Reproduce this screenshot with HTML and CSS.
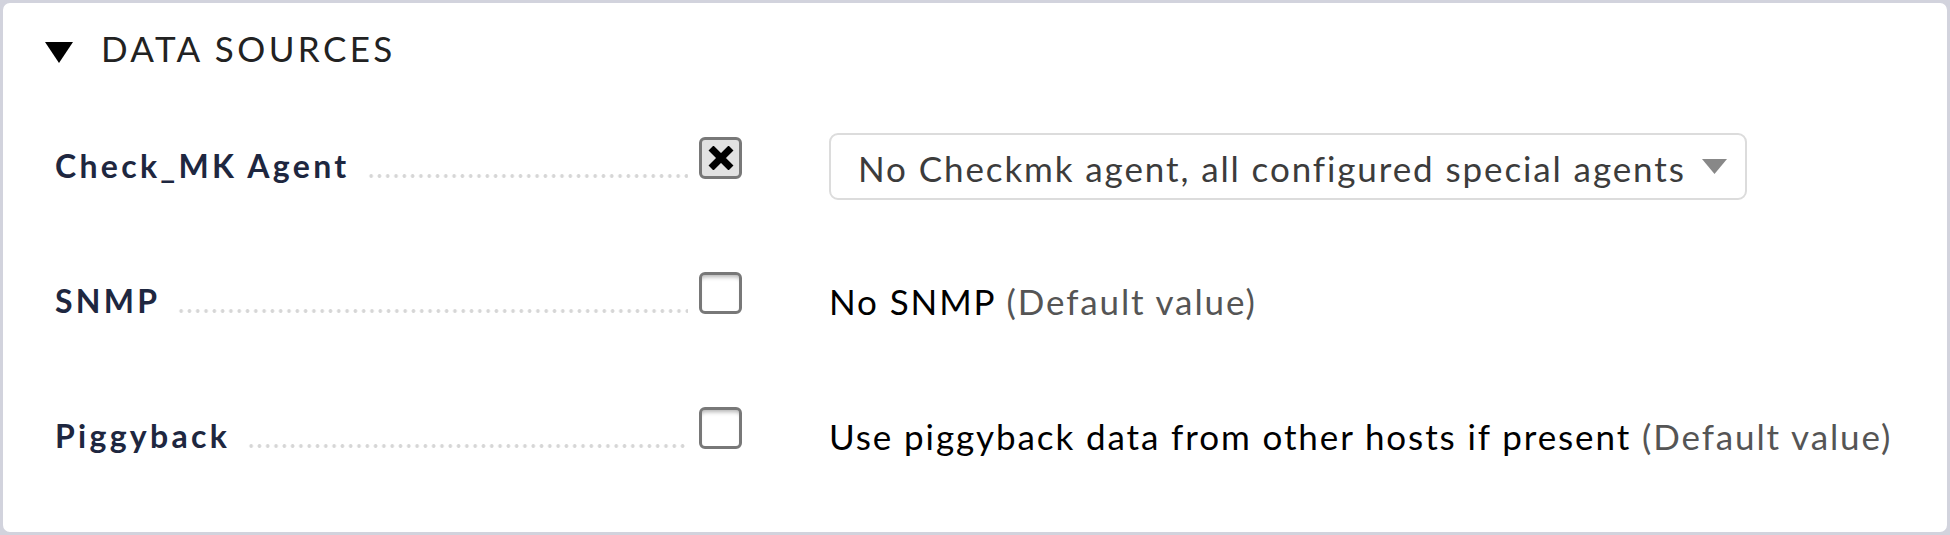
FILE: index.html
```
<!DOCTYPE html>
<html>
<head>
<meta charset="utf-8">
<link rel="stylesheet" href="styles.css">
</head>
<body>
<div class="frame">
  <div class="heading">
    <svg class="tri" width="28" height="21" viewBox="0 0 28 21"><polygon points="0,0 28,0 14,21" fill="#000"/></svg>
    <span class="heading-text">DATA SOURCES</span>
  </div>
  <div class="rows">
    <div class="row">
      <div class="label"><span class="label-text">Check_MK Agent</span><span class="dots"></span></div>
      <div class="cb-cell"><span class="cb checked"><svg width="26" height="24" viewBox="0 0 26 24"><path d="M3 2 L23 22 M23 2 L3 22" stroke="#000" stroke-width="7" stroke-linecap="butt"/></svg></span></div>
      <div class="value"><div class="select"><span class="select-text">No Checkmk agent, all configured special agents</span><svg class="arrow" width="25" height="15" viewBox="0 0 25 15"><polygon points="0,0 25,0 12.5,15" fill="#888"/></svg></div></div>
    </div>
    <div class="row">
      <div class="label"><span class="label-text">SNMP</span><span class="dots"></span></div>
      <div class="cb-cell"><span class="cb"></span></div>
      <div class="value"><span class="plain">No SNMP <span class="default">(Default value)</span></span></div>
    </div>
    <div class="row">
      <div class="label"><span class="label-text">Piggyback</span><span class="dots"></span></div>
      <div class="cb-cell"><span class="cb"></span></div>
      <div class="value"><span class="plain">Use piggyback data from other hosts if present <span class="default">(Default value)</span></span></div>
    </div>
  </div>
</div>
</body>
</html>
```
FILE: styles.css
```
html, body {
  margin: 0;
  padding: 0;
  background: #d2d3dd;
}
.frame {
  box-sizing: border-box;
  width: 1950px;
  height: 535px;
  border: 3px solid #d2d3dd;
  border-radius: 10px;
  background: #fff;
  font-family: Lato, "Liberation Sans", sans-serif;
  padding: 24px 0 0 42px;
}
.heading {
  display: flex;
  align-items: flex-start;
  height: 42px;
}
.tri {
  margin-top: 15px;
  flex: none;
}
.heading-text {
  margin-left: 28px;
  font-size: 35px;
  line-height: 42px;
  letter-spacing: 3.4px;
  color: #222;
}
.rows {
  margin-top: 64px;
  margin-left: 10px;
}
.row {
  display: grid;
  grid-template-columns: 644px 130px 1fr;
  align-items: start;
  height: 135px;
}
.label {
  display: flex;
  align-items: flex-start;
  padding-right: 11px;
  margin-top: 13px;
}
.label-text {
  font-size: 32px;
  font-weight: bold;
  line-height: 40px;
  letter-spacing: 3.3px;
  color: #1e2740;
  white-space: nowrap;
}
.dots {
  flex: 1;
  height: 4px;
  margin-top: 28px;
  margin-left: 17px;
  background-image: radial-gradient(circle, #d6d6d6 1.6px, transparent 2.1px);
  background-size: 8.3px 4px;
  background-repeat: repeat-x;
}
.cb-cell {
  padding-top: 4px;
}
.cb {
  box-sizing: border-box;
  display: flex;
  align-items: center;
  justify-content: center;
  width: 43px;
  height: 42px;
  border: 3px solid #787878;
  border-radius: 6px;
  background: #fff;
  box-shadow: inset 0 5px 4px -3px rgba(0,0,0,0.3);
}
.cb.checked {
  background: #e2e2e2;
  box-shadow: none;
}
.select {
  display: inline-flex;
  align-items: center;
  box-sizing: border-box;
  height: 67px;
  border: 2px solid #dcdcdc;
  border-radius: 9px;
  padding: 0 18px 0 27px;
  background: #fff;
}
.select-text {
  font-size: 35px;
  line-height: 42px;
  letter-spacing: 1.9px;
  color: #3c3c3c;
  white-space: nowrap;
  margin-top: 2px;
}
.arrow {
  margin-left: 16px;
  flex: none;
}
.plain {
  display: block;
  margin-top: 12px;
  font-size: 35px;
  line-height: 42px;
  letter-spacing: 1.9px;
  color: #000;
  white-space: nowrap;
}
.default {
  color: #555;
}
```
